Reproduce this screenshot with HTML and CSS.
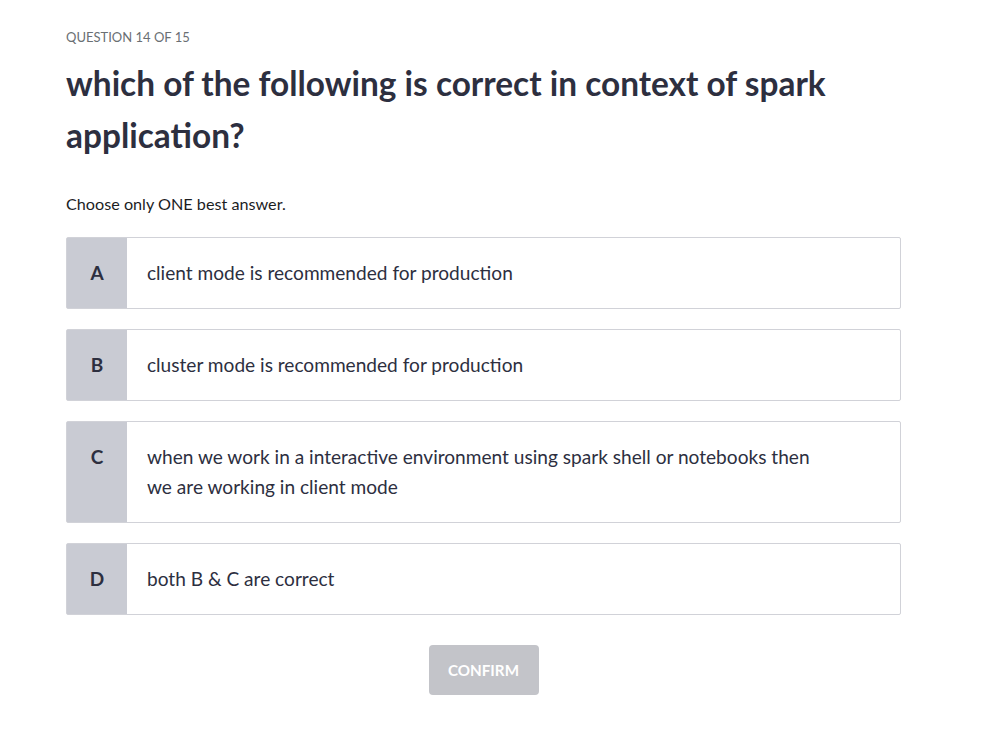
FILE: index.html
```html
<!DOCTYPE html>
<html>
<head>
<meta charset="utf-8">
<link rel="stylesheet" href="styles.css">
</head>
<body>
<main class="quiz">
  <div class="counter">QUESTION 14 OF 15</div>
  <h1 class="question">which of the following is correct in context of spark application?</h1>
  <p class="hint">Choose only ONE best answer.</p>
  <div class="options">
    <div class="option">
      <div class="letter">A</div>
      <div class="text">client mode is recommended for production</div>
    </div>
    <div class="option">
      <div class="letter">B</div>
      <div class="text">cluster mode is recommended for production</div>
    </div>
    <div class="option">
      <div class="letter">C</div>
      <div class="text">when we work in a interactive environment using spark shell or notebooks then<br>we are working in client mode</div>
    </div>
    <div class="option">
      <div class="letter">D</div>
      <div class="text">both B &amp; C are correct</div>
    </div>
  </div>
  <div class="actions">
    <button class="confirm">CONFIRM</button>
  </div>
</main>
</body>
</html>
```
FILE: styles.css
```css
html, body {
  margin: 0;
  padding: 0;
  background: #ffffff;
}
body {
  font-family: Lato, "Open Sans", sans-serif;
  color: #1c1d1f;
}
.quiz {
  width: 835px;
  padding: 29px 0 0 66px;
}
.counter {
  font-size: 13px;
  color: #6a6f73;
  line-height: 16px;
}
.question {
  margin: 12px 0 0 0;
  font-size: 33.4px;
  line-height: 52px;
  font-weight: 700;
  color: #2d2f3f;
  width: 800px;
}
.hint {
  margin: 33px 0 0 0;
  font-size: 16.2px;
  line-height: 20px;
  color: #1c1d1f;
}
.options {
  margin-top: 23px;
  display: flex;
  flex-direction: column;
  gap: 20px;
}
.option {
  display: flex;
  border: 1px solid #d1d2d8;
  border-radius: 2px;
  background: #fff;
}
.letter {
  width: 60px;
  flex: none;
  background: #c9cbd3;
  display: flex;
  justify-content: center;
  padding-top: 20px;
  box-sizing: border-box;
  font-weight: 700;
  font-size: 19px;
  line-height: 30px;
  color: #2d2f3f;
}
.text {
  padding: 20px;
  font-size: 19.1px;
  line-height: 30px;
  color: #2d2f3f;
}
.actions {
  display: flex;
  justify-content: center;
  margin-top: 30px;
}
.confirm {
  width: 110px;
  height: 50px;
  border: none;
  border-radius: 4px;
  background: #c3c4c9;
  color: #fff;
  font-family: Lato, "Open Sans", sans-serif;
  font-weight: 700;
  font-size: 15.2px;
}
```
